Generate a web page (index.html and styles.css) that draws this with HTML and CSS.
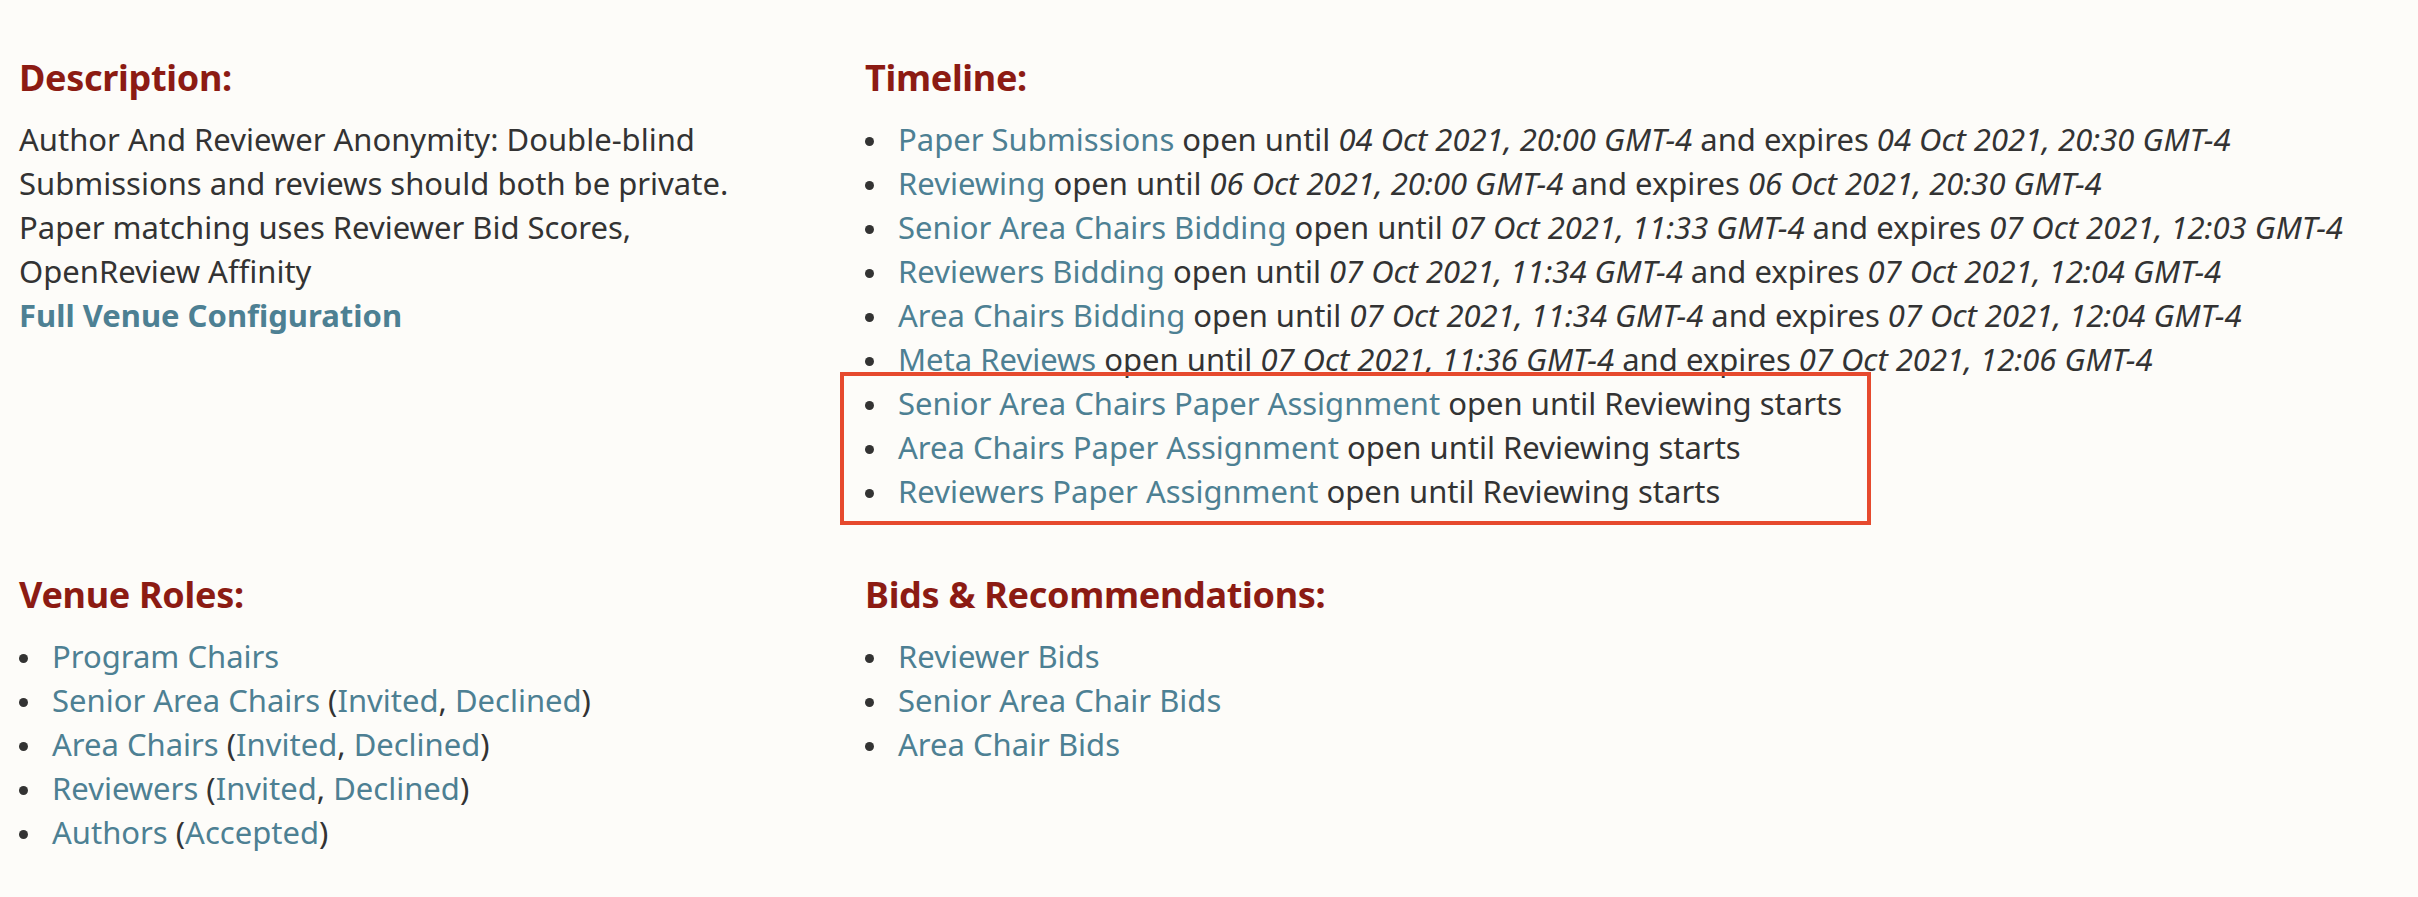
FILE: index.html
```html
<!DOCTYPE html>
<html lang="en">
<head>
<meta charset="utf-8">
<title>Venue Configuration</title>
<link rel="stylesheet" href="styles.css">
</head>
<body>
<main class="page">
  <section class="block">
    <h3 class="block-title">Description:</h3>
    <p class="desc">Author And Reviewer Anonymity: Double-blind Submissions and reviews should both be private. Paper matching uses Reviewer Bid Scores, OpenReview Affinity</p>
    <a class="config-link" href="#">Full Venue Configuration</a>
  </section>

  <section class="block">
    <h3 class="block-title">Timeline:</h3>
    <ul class="items timeline">
      <li><a href="#">Paper Submissions</a> open until <em>04 Oct 2021, 20:00 GMT-4</em> and expires <em>04 Oct 2021, 20:30 GMT-4</em></li>
      <li><a href="#">Reviewing</a> open until <em>06 Oct 2021, 20:00 GMT-4</em> and expires <em>06 Oct 2021, 20:30 GMT-4</em></li>
      <li><a href="#">Senior Area Chairs Bidding</a> open until <em>07 Oct 2021, 11:33 GMT-4</em> and expires <em>07 Oct 2021, 12:03 GMT-4</em></li>
      <li><a href="#">Reviewers Bidding</a> open until <em>07 Oct 2021, 11:34 GMT-4</em> and expires <em>07 Oct 2021, 12:04 GMT-4</em></li>
      <li><a href="#">Area Chairs Bidding</a> open until <em>07 Oct 2021, 11:34 GMT-4</em> and expires <em>07 Oct 2021, 12:04 GMT-4</em></li>
      <li><a href="#">Meta Reviews</a> open until <em>07 Oct 2021, 11:36 GMT-4</em> and expires <em>07 Oct 2021, 12:06 GMT-4</em></li>
      <li><a href="#">Senior Area Chairs Paper Assignment</a> open until Reviewing starts</li>
      <li><a href="#">Area Chairs Paper Assignment</a> open until Reviewing starts</li>
      <li><a href="#">Reviewers Paper Assignment</a> open until Reviewing starts</li>
      <li class="highlight" aria-hidden="true"></li>
    </ul>
  </section>

  <section class="block">
    <h3 class="block-title">Venue Roles:</h3>
    <ul class="items">
      <li><a href="#">Program Chairs</a></li>
      <li><a href="#">Senior Area Chairs</a> (<a href="#">Invited</a>, <a href="#">Declined</a>)</li>
      <li><a href="#">Area Chairs</a> (<a href="#">Invited</a>, <a href="#">Declined</a>)</li>
      <li><a href="#">Reviewers</a> (<a href="#">Invited</a>, <a href="#">Declined</a>)</li>
      <li><a href="#">Authors</a> (<a href="#">Accepted</a>)</li>
    </ul>
  </section>

  <section class="block">
    <h3 class="block-title">Bids &amp; Recommendations:</h3>
    <ul class="items">
      <li><a href="#">Reviewer Bids</a></li>
      <li><a href="#">Senior Area Chair Bids</a></li>
      <li><a href="#">Area Chair Bids</a></li>
    </ul>
  </section>
</main>
</body>
</html>
```

FILE: styles.css
```css
html, body {
  margin: 0;
  padding: 0;
}

body {
  background: #fdfcf9;
  color: #333333;
  font-family: "Noto Sans", "Open Sans", "DejaVu Sans", sans-serif;
  font-size: 31px;
  line-height: 44px;
}

.page {
  display: grid;
  grid-template-columns: 730px 1fr;
  column-gap: 116px;
  row-gap: 59px;
  padding: 55px 20px 40px 19px;
}

.block {
  min-width: 0;
}

.block-title {
  margin: 0 0 16px 0;
  font-size: 36px;
  line-height: 46px;
  font-weight: 700;
  letter-spacing: -0.3px;
  color: #8c1b13;
}

.desc {
  margin: 0;
}

a {
  color: #4d8093;
  text-decoration: none;
}

.config-link {
  font-weight: 700;
}

em {
  font-style: italic;
}

.items {
  list-style: none;
  margin: 0;
  padding: 0 0 0 33px;
  position: relative;
}

.items li::before {
  content: "";
  display: inline-block;
  width: 9px;
  height: 9px;
  border-radius: 50%;
  background: #333333;
  margin-left: -33px;
  margin-right: 24px;
  vertical-align: 5px;
}

.items li.highlight::before {
  content: none;
}

.timeline .highlight {
  position: absolute;
  left: -25px;
  top: 255px;
  width: 1031px;
  height: 153px;
  box-sizing: border-box;
  border: 4px solid #e64a2e;
  pointer-events: none;
}
```
